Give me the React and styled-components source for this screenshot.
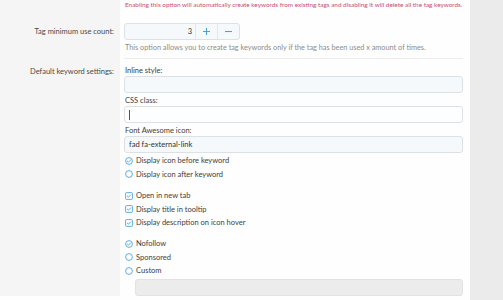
import React from "react";
import styled, { createGlobalStyle } from "styled-components";

const GlobalStyle = createGlobalStyle`
  html, body {
    margin: 0;
    padding: 0;
    background: #ebebeb;
  }
  body {
    font-family: Lato, 'Open Sans', sans-serif;
    color: #3d3d3d;
  }
`;

const Page = styled.div`
  width: 470px;
  height: 300px;
  overflow: hidden;
  background: #fefefe;
`;

const FormRow = styled.div`
  display: grid;
  grid-template-columns: 120px 1fr;
`;

const Label = styled.div`
  background: #f5f5f5;
  text-align: right;
  padding: ${p => p.$top || 0}px 6px 0 0;
  font-size: 7.5px;
  line-height: 10px;
  color: #4a4a4a;
`;

const Field = styled.div`
  padding: ${p => p.$pad || "0"};
  margin: 0 7px 0 4px;
  border-bottom: ${p => (p.$sep ? "1px solid #ececec" : "none")};
`;

const ErrorHint = styled.div`
  font-size: 6.4px;
  line-height: 10px;
  color: #c94d74;
  white-space: nowrap;
  padding-left: 1px;
`;

const Hint = styled.div`
  font-size: 7.3px;
  line-height: 10px;
  color: #8d8d8d;
  margin-top: 3px;
  padding-left: 1px;
`;

const InputGroup = styled.div`
  display: flex;
  width: 116px;
  height: 17px;
  box-sizing: border-box;
  border: 1px solid #dde2e6;
  border-radius: 3px;
  background: #f6f9fc;
`;

const NumberBox = styled.div`
  flex: 1;
  text-align: right;
  padding-right: 3px;
  font-size: 7.5px;
  line-height: 15px;
  color: #333;
`;

const StepButton = styled.div`
  width: 21px;
  border-left: 1px solid #e4e8ec;
  display: flex;
  align-items: center;
  justify-content: center;
`;

const FieldLabel = styled.div`
  font-size: 7.5px;
  line-height: 10px;
  padding-left: 1px;
  color: #3d3d3d;
  margin-top: ${p => p.$mt || 0}px;
`;

const TextInput = styled.div`
  height: 17px;
  box-sizing: border-box;
  border: 1px solid ${p => (p.$disabled ? "#e2e2e2" : "#dce1e5")};
  border-radius: 3px;
  background: ${p => (p.$disabled ? "#ececec" : p.$white ? "#fefefe" : "#f6f9fc")};
  font-size: 7.6px;
  line-height: 15px;
  padding-left: 4px;
  color: #333;
  margin-left: ${p => (p.$indent ? 11 : 0)}px;
  margin-top: ${p => p.$mt || 0}px;
`;

const Caret = styled.span`
  display: inline-block;
  width: 1px;
  height: 10px;
  background: #555;
  vertical-align: middle;
`;

const OptionList = styled.div`
  margin-top: ${p => p.$mt || 0}px;
  display: flex;
  flex-direction: column;
`;

const Option = styled.div`
  display: flex;
  align-items: center;
  gap: 3px;
  height: 13.5px;
  font-size: 7.5px;
  color: #3d3d3d;
  padding-left: 1px;
`;

const Mark = ({ type, checked }) => (
  <svg width="8" height="8" viewBox="0 0 8 8">
    {type === "radio" ? (
      <circle cx="4" cy="4" r="3.4" fill="none" stroke="#4aa6e6" strokeWidth="0.9" />
    ) : (
      <rect x="0.6" y="0.6" width="6.8" height="6.8" rx="0.8" fill="none" stroke="#4aa6e6" strokeWidth="0.9" />
    )}
    {checked && (
      <path d="M2.3 4.1 L3.5 5.2 L5.7 2.9" fill="none" stroke="#4aa6e6" strokeWidth="0.9" strokeLinecap="round" strokeLinejoin="round" />
    )}
  </svg>
);

const Choice = ({ type, checked, children }) => (
  <Option>
    <Mark type={type} checked={checked} />
    <span>{children}</span>
  </Option>
);

const Plus = () => (
  <svg width="9" height="9" viewBox="0 0 9 9">
    <path d="M4.5 1 V8 M1 4.5 H8" stroke="#47a2e0" strokeWidth="1.1" />
  </svg>
);

const Minus = () => (
  <svg width="9" height="9" viewBox="0 0 9 9">
    <path d="M1 4.5 H8" stroke="#47a2e0" strokeWidth="1.1" />
  </svg>
);

export default function App() {
  return (
    <>
      <GlobalStyle />
      <Page>
        <FormRow>
          <Label />
          <Field $pad="0 0 3px 0">
            <ErrorHint>
              Enabling this option will automatically create keywords from existing tags and disabling it will delete all the tag keywords.
            </ErrorHint>
          </Field>
        </FormRow>
        <FormRow>
          <Label $top={14}>Tag minimum use count:</Label>
          <Field $pad="10px 0 5px 0" $sep>
            <InputGroup>
              <NumberBox>3</NumberBox>
              <StepButton><Plus /></StepButton>
              <StepButton><Minus /></StepButton>
            </InputGroup>
            <Hint>This option allows you to create tag keywords only if the tag has been used x amount of times.</Hint>
          </Field>
        </FormRow>
        <FormRow>
          <Label $top={8}>Default keyword settings:</Label>
          <Field $pad="7px 0 0 0">
            <FieldLabel>Inline style:</FieldLabel>
            <TextInput />
            <FieldLabel $mt={3}>CSS class:</FieldLabel>
            <TextInput $white>
              <Caret />
            </TextInput>
            <FieldLabel $mt={3}>Font Awesome icon:</FieldLabel>
            <TextInput>fad fa-external-link</TextInput>
            <OptionList $mt={1}>
              <Choice type="radio" checked>Display icon before keyword</Choice>
              <Choice type="radio">Display icon after keyword</Choice>
            </OptionList>
            <OptionList $mt={8}>
              <Choice type="check" checked>Open in new tab</Choice>
              <Choice type="check" checked>Display title in tooltip</Choice>
              <Choice type="check" checked>Display description on icon hover</Choice>
            </OptionList>
            <OptionList $mt={7.5}>
              <Choice type="radio" checked>Nofollow</Choice>
              <Choice type="radio">Sponsored</Choice>
              <Choice type="radio">Custom</Choice>
            </OptionList>
            <TextInput $disabled $indent $mt={1} />
          </Field>
        </FormRow>
      </Page>
    </>
  );
}
